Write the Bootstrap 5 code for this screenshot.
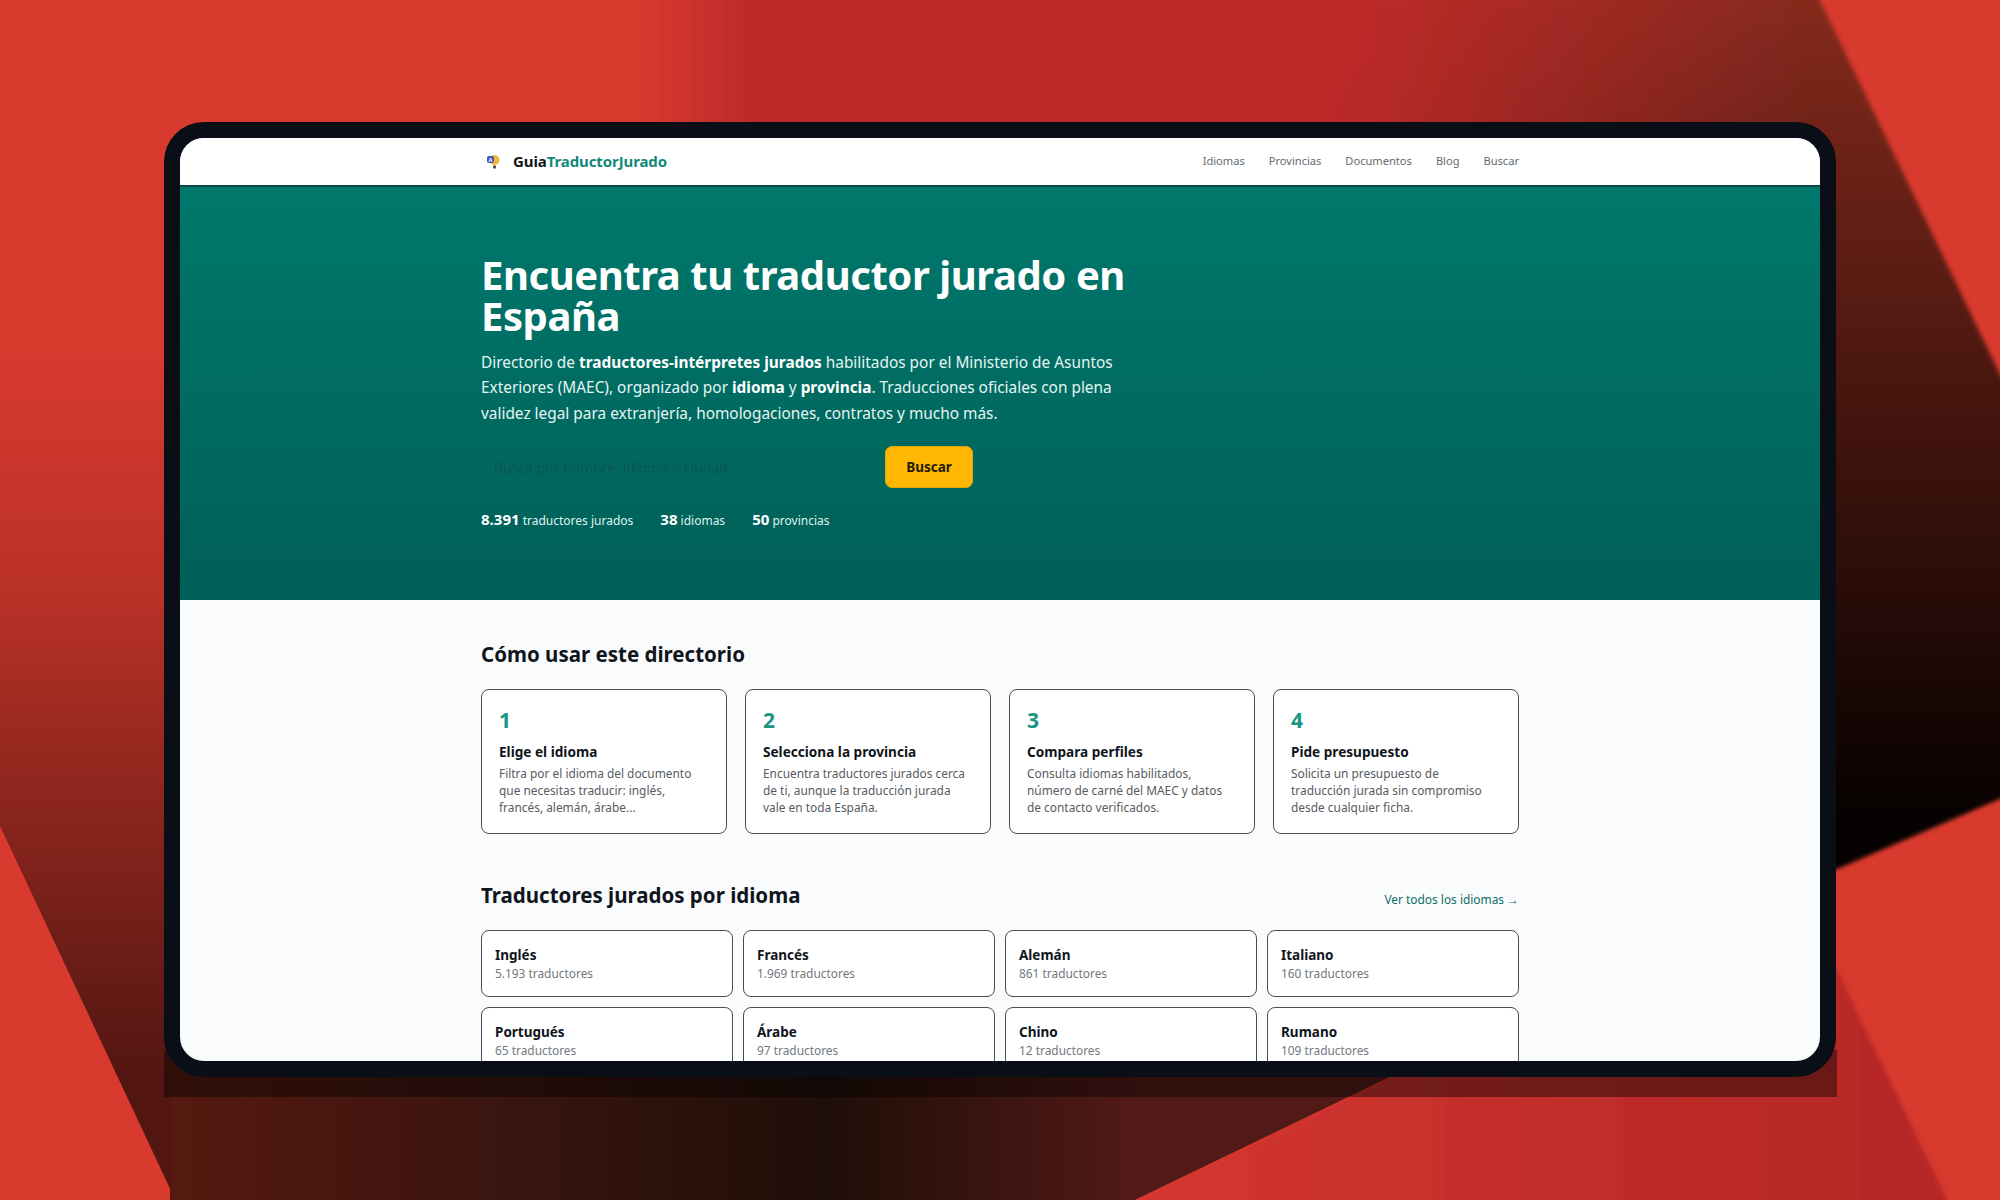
<!DOCTYPE html>
<html lang="es">
<head>
    <meta charset="UTF-8">
    <meta name="viewport" content="width=device-width, initial-scale=1.0">
    <title>GuiaTraductorJurado</title>
    <link href="https://cdn.jsdelivr.net/npm/bootstrap@5.3.2/dist/css/bootstrap.min.css" rel="stylesheet">
    <style>
        html, body { height: 100%; }
        body {
            margin: 0;
            overflow: hidden;
            font-family: "Noto Sans", "Liberation Sans", sans-serif;
            background-color: #d93a2e;
        }
        /* fondo decorativo detras de la maqueta */
        .fondo { position: absolute; inset: 0; width: 2000px; height: 1200px; }
        .escena { position: relative; padding: 122px 163px 0 164px; height: 1200px; }
        .marco-sombra {
            height: 975px;
            background: linear-gradient(transparent 928px, rgba(0,0,0,.42) 928px);
        }
        .marco {
            width: 1672px;
            height: 955px;
            background: #0a0f17;
            border: 16px solid #0a0f17;
            border-radius: 40px;
        }
        .pantalla { height: 923px; border-radius: 24px; overflow: hidden; background: #f9fbfd; }
        .ancho { width: 1038px; margin: 0 auto; }
        .barra { height: 49px; background: #fff; border-bottom: 2px solid #0b4a45; }
        .barra .ancho { height: 47px; }
        .logo-ico { margin-left: 5px; }
        .logo-txt { font-size: 15px; font-weight: 700; color: #10151c; margin-left: 13px; letter-spacing: -.1px; }
        .logo-txt span { color: #12897b; }
        .enlace { font-size: 11.1px; color: #656a70; text-decoration: none; }
        .heroe { height: 413px; background: linear-gradient(#00786c, #005f58); padding-top: 67px; color: #fff; }
        .heroe h1 { font-size: 40px; line-height: 41px; font-weight: 700; letter-spacing: -.44px; width: 680px; margin: 0 0 14px; }
        .heroe-texto { font-size: 15.4px; line-height: 25.4px; width: 650px; margin: 0 0 20px; color: #e6f5f2; }
        .heroe-texto strong { color: #fff; }
        .buscador { height: 42px; }
        .buscador input { width: 404px; height: 42px; padding: 0 13px; border: 0; background: transparent; font-size: 14px; outline: 0; }
        .buscador input::placeholder { color: #0b5550; opacity: 1; }
        .btn-buscar { width: 88px; height: 42px; padding: 0; background: #ffb703; border: 1px solid #e0a80a; border-radius: 7px; font-size: 13.5px; font-weight: 700; color: #231a05; }
        .cifras { margin-top: 21px; gap: 27px; font-size: 12px; color: #dff3ef; line-height: 20px; }
        .cifras strong { font-size: 15px; color: #fff; }
        .seccion-tit { font-size: 20.5px; font-weight: 700; color: #10151c; margin: 0; line-height: 28px; }
        .tit-pasos { margin-top: 40px; margin-bottom: 21px; }
        .paso { width: 246px; height: 145px; background: #fff; border: 1px solid #4a4d52; border-radius: 8px; padding: 16px 17px; }
        .paso-num { font-size: 21px; font-weight: 700; color: #1a9585; line-height: 28px; margin-bottom: 8px; }
        .paso-tit { font-size: 13.6px; font-weight: 700; color: #10151c; line-height: 20px; }
        .paso-txt { font-size: 11.9px; line-height: 17px; color: #565b62; margin: 3px 0 0; }
        .cab-idiomas { margin-top: 47px; margin-bottom: 21px; }
        .rejilla { display: grid; grid-template-columns: repeat(4, 252px); gap: 10px; }
        .idioma { height: 67px; background: #fff; border: 1px solid #4a4d52; border-radius: 8px; padding: 15px 13px 0; }
        .idioma-nom { font-size: 13.5px; font-weight: 700; color: #10151c; line-height: 19px; }
        .idioma-num { font-size: 11.9px; color: #73787e; line-height: 17px; }
        .ver-todos { font-size: 11.9px; color: #0d6f65; text-decoration: none; }
    </style>
</head>
<body>
    <!-- Fondo -->
    <svg class="fondo" viewBox="0 0 2000 1200" xmlns="http://www.w3.org/2000/svg">
        <defs>
            <filter id="suave" x="-5%" y="-5%" width="110%" height="110%"><feGaussianBlur stdDeviation="2"/></filter>
            <linearGradient id="franja" gradientUnits="userSpaceOnUse" x1="640" x2="1810" y1="0" y2="0">
                <stop offset="0" stop-color="#bd2c2a" stop-opacity="0"/>
                <stop offset=".09" stop-color="#bd2c2a"/>
                <stop offset=".62" stop-color="#bd2c2a"/>
                <stop offset="1" stop-color="#85291f"/>
            </linearGradient>
            <linearGradient id="cuna" gradientUnits="userSpaceOnUse" x1="0" x2="0" y1="0" y2="830">
                <stop offset="0" stop-color="#000" stop-opacity="0"/>
                <stop offset="1" stop-color="#050302" stop-opacity=".97"/>
            </linearGradient>
            <linearGradient id="cunaFade" gradientUnits="userSpaceOnUse" x1="1300" x2="1750" y1="0" y2="0">
                <stop offset="0" stop-color="#000"/>
                <stop offset="1" stop-color="#fff"/>
            </linearGradient>
            <mask id="cunaMask" maskUnits="userSpaceOnUse" x="0" y="-20" width="2020" height="1240">
                <rect x="0" y="-20" width="2020" height="1240" fill="url(#cunaFade)"/>
            </mask>
            <linearGradient id="izq" gradientUnits="userSpaceOnUse" x1="0" x2="0" y1="340" y2="1077">
                <stop offset="0" stop-color="#000" stop-opacity="0"/>
                <stop offset=".35" stop-color="#000" stop-opacity=".15"/>
                <stop offset=".66" stop-color="#000" stop-opacity=".38"/>
                <stop offset="1" stop-color="#000" stop-opacity=".62"/>
            </linearGradient>
            <linearGradient id="abajo" gradientUnits="userSpaceOnUse" x1="170" x2="1135" y1="0" y2="0">
                <stop offset="0" stop-color="#55190f"/>
                <stop offset=".35" stop-color="#3a1510"/>
                <stop offset=".68" stop-color="#1f0e08"/>
                <stop offset="1" stop-color="#521a17"/>
            </linearGradient>
            <linearGradient id="rojo" gradientUnits="userSpaceOnUse" x1="1135" x2="1900" y1="0" y2="0">
                <stop offset="0" stop-color="#d53630"/>
                <stop offset=".45" stop-color="#c42f2b"/>
                <stop offset="1" stop-color="#b52826"/>
            </linearGradient>
        </defs>
        <rect width="2000" height="1200" fill="#d93a2e"/>
        <polygon points="640,-20 1810,-20 2010,396 2010,794 1836,869 640,869" fill="url(#franja)" filter="url(#suave)"/>
        <g mask="url(#cunaMask)">
            <polygon points="1200,-20 1810,-20 2010,396 2010,794 1836,869 1200,869" fill="url(#cuna)" filter="url(#suave)"/>
        </g>
        <polygon points="-20,300 200,300 200,1210 180,1210 0,826 -20,783" fill="url(#izq)"/>
        <polygon points="1114,1210 1425,1060 1425,960 1835,966 1952,1210" fill="url(#rojo)" filter="url(#suave)"/>
        <polygon points="170,1060 170,1210 1114,1210 1425,1060" fill="url(#abajo)"/>
    </svg>

    <div class="escena">
        <div class="marco-sombra">
            <div class="marco">
                <div class="pantalla">
                    <nav class="barra">
                        <div class="ancho d-flex align-items-center justify-content-between">
                            <div class="d-flex align-items-center">
                                <svg class="logo-ico" width="14" height="16" viewBox="0 0 14 16" xmlns="http://www.w3.org/2000/svg">
                                    <circle cx="8.5" cy="6" r="5" fill="#f3b63c"/>
                                    <rect x="1" y="2" width="7" height="7" rx="2" fill="#4353bd"/>
                                    <text x="2.6" y="7.6" font-size="5.5" font-weight="700" fill="#fff">A</text>
                                    <rect x="7.2" y="11.5" width="2.6" height="3" fill="#4a3a20"/>
                                </svg>
                                <span class="logo-txt">Guia<span>TraductorJurado</span></span>
                            </div>
                            <div class="d-flex gap-4">
                                <a class="enlace" href="#">Idiomas</a>
                                <a class="enlace" href="#">Provincias</a>
                                <a class="enlace" href="#">Documentos</a>
                                <a class="enlace" href="#">Blog</a>
                                <a class="enlace" href="#">Buscar</a>
                            </div>
                        </div>
                    </nav>

                    <header class="heroe">
                        <div class="ancho">
                            <h1>Encuentra tu traductor jurado en España</h1>
                            <p class="heroe-texto">Directorio de <strong>traductores-intérpretes jurados</strong> habilitados por el Ministerio de Asuntos Exteriores (MAEC), organizado por <strong>idioma</strong> y <strong>provincia</strong>. Traducciones oficiales con plena validez legal para extranjería, homologaciones, contratos y mucho más.</p>
                            <div class="buscador d-flex">
                                <input type="text" placeholder="Busca por nombre, idioma o ciudad...">
                                <button class="btn-buscar" type="button">Buscar</button>
                            </div>
                            <div class="cifras d-flex">
                                <span><strong>8.391</strong> traductores jurados</span>
                                <span><strong>38</strong> idiomas</span>
                                <span><strong>50</strong> provincias</span>
                            </div>
                        </div>
                    </header>

                    <main class="ancho">
                        <h2 class="seccion-tit tit-pasos">Cómo usar este directorio</h2>
                        <div class="d-flex justify-content-between">
                            <div class="paso">
                                <div class="paso-num">1</div>
                                <div class="paso-tit">Elige el idioma</div>
                                <p class="paso-txt">Filtra por el idioma del documento que necesitas traducir: inglés, francés, alemán, árabe...</p>
                            </div>
                            <div class="paso">
                                <div class="paso-num">2</div>
                                <div class="paso-tit">Selecciona la provincia</div>
                                <p class="paso-txt">Encuentra traductores jurados cerca de ti, aunque la traducción jurada vale en toda España.</p>
                            </div>
                            <div class="paso">
                                <div class="paso-num">3</div>
                                <div class="paso-tit">Compara perfiles</div>
                                <p class="paso-txt">Consulta idiomas habilitados, número de carné del MAEC y datos de contacto verificados.</p>
                            </div>
                            <div class="paso">
                                <div class="paso-num">4</div>
                                <div class="paso-tit">Pide presupuesto</div>
                                <p class="paso-txt">Solicita un presupuesto de traducción jurada sin compromiso desde cualquier ficha.</p>
                            </div>
                        </div>

                        <div class="cab-idiomas d-flex justify-content-between align-items-end">
                            <h2 class="seccion-tit">Traductores jurados por idioma</h2>
                            <a class="ver-todos" href="#">Ver todos los idiomas →</a>
                        </div>
                        <div class="rejilla">
                            <div class="idioma"><div class="idioma-nom">Inglés</div><div class="idioma-num">5.193 traductores</div></div>
                            <div class="idioma"><div class="idioma-nom">Francés</div><div class="idioma-num">1.969 traductores</div></div>
                            <div class="idioma"><div class="idioma-nom">Alemán</div><div class="idioma-num">861 traductores</div></div>
                            <div class="idioma"><div class="idioma-nom">Italiano</div><div class="idioma-num">160 traductores</div></div>
                            <div class="idioma"><div class="idioma-nom">Portugués</div><div class="idioma-num">65 traductores</div></div>
                            <div class="idioma"><div class="idioma-nom">Árabe</div><div class="idioma-num">97 traductores</div></div>
                            <div class="idioma"><div class="idioma-nom">Chino</div><div class="idioma-num">12 traductores</div></div>
                            <div class="idioma"><div class="idioma-nom">Rumano</div><div class="idioma-num">109 traductores</div></div>
                        </div>
                    </main>
                </div>
            </div>
        </div>
    </div>

    <script src="https://cdn.jsdelivr.net/npm/bootstrap@5.3.2/dist/js/bootstrap.bundle.min.js"></script>
</body>
</html>
